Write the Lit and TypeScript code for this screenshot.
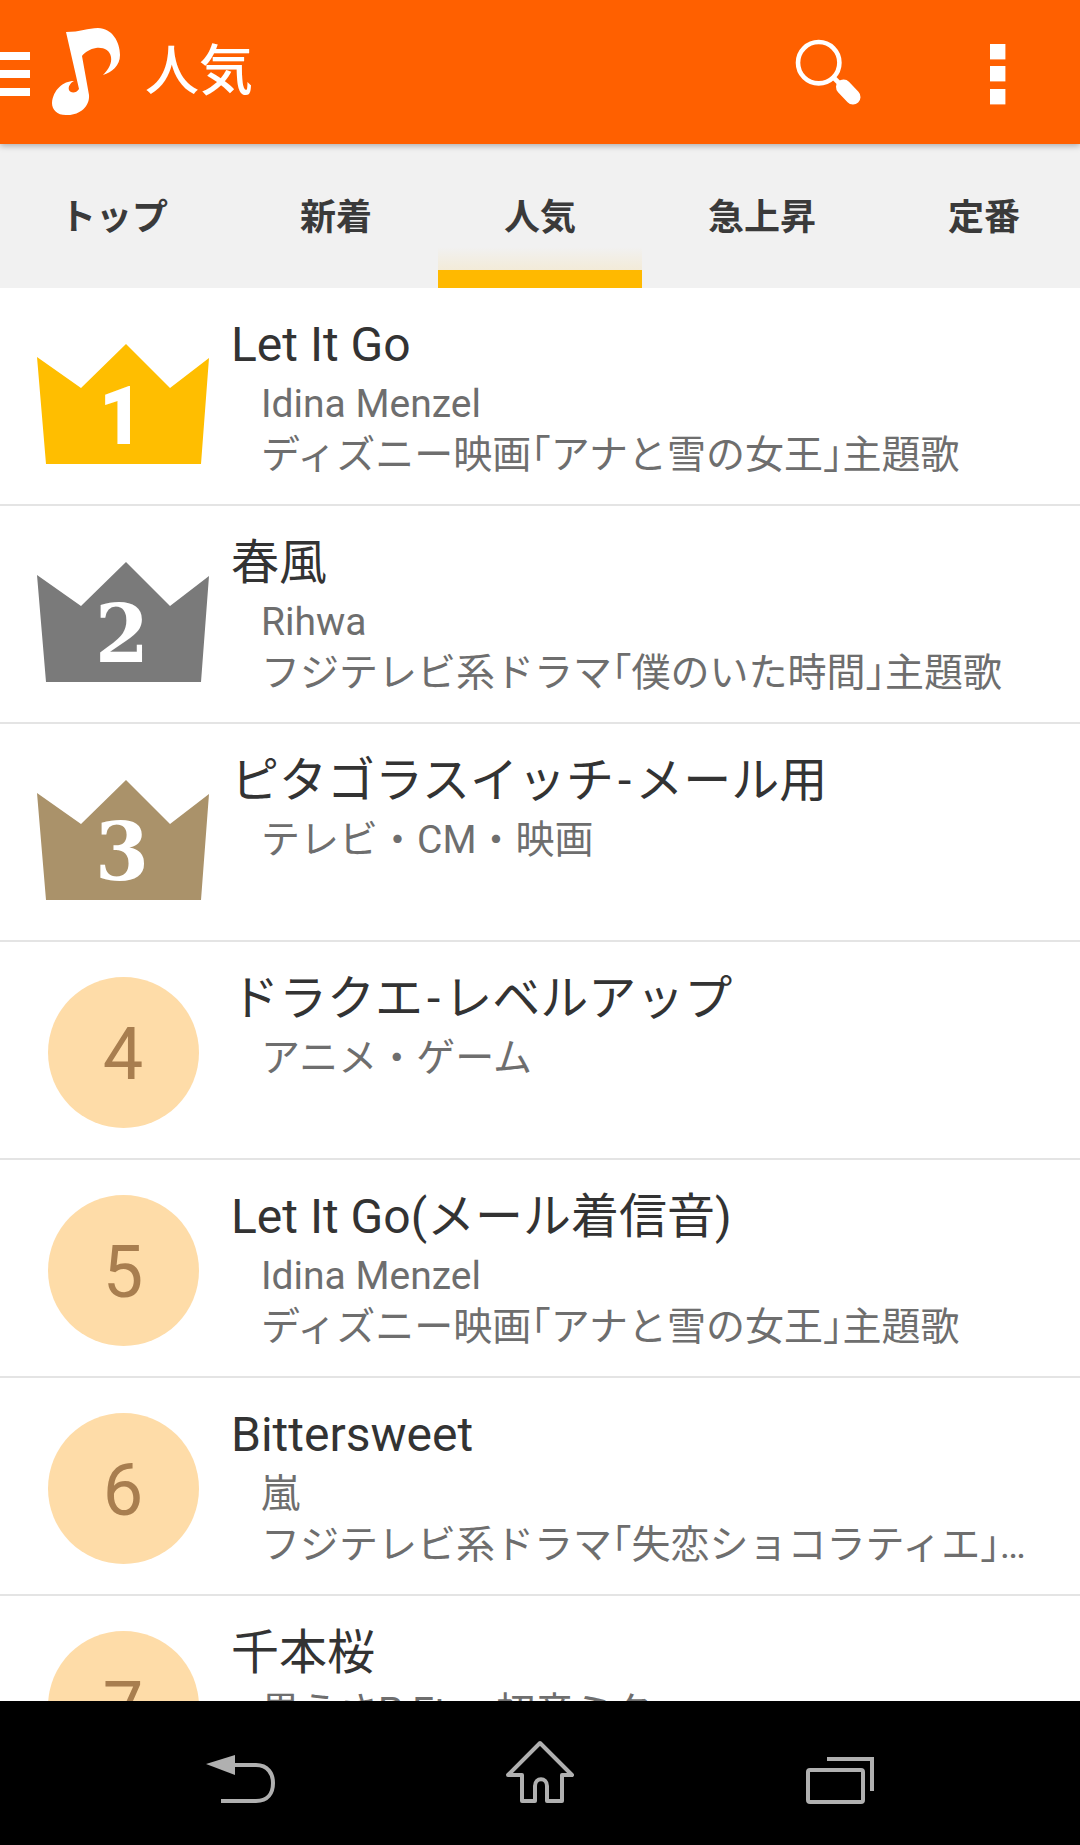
import { LitElement, html, css } from "lit";
import { customElement } from "lit/decorators.js";

interface Song { rank: number; title: string; artist: string; note: string; }

const SONGS: Song[] = [
  { rank: 1, title: "Let It Go", artist: "Idina Menzel", note: "ディズニー映画「アナと雪の女王」主題歌" },
  { rank: 2, title: "春風", artist: "Rihwa", note: "フジテレビ系ドラマ「僕のいた時間」主題歌" },
  { rank: 3, title: "ピタゴラスイッチ-メール用", artist: "テレビ・CM・映画", note: "" },
  { rank: 4, title: "ドラクエ-レベルアップ", artist: "アニメ・ゲーム", note: "" },
  { rank: 5, title: "Let It Go(メール着信音)", artist: "Idina Menzel", note: "ディズニー映画「アナと雪の女王」主題歌" },
  { rank: 6, title: "Bittersweet", artist: "嵐", note: "フジテレビ系ドラマ「失恋ショコラティエ」主題歌" },
  { rank: 7, title: "千本桜", artist: "黒うさP Ft.・初音ミク", note: "" },
];

const TABS = ["トップ", "新着", "人気", "急上昇", "定番"];
const CROWN: Record<number, string> = { 1: "#ffbe00", 2: "#7a7a7a", 3: "#aa926a" };

@customElement("app-root")
export class AppRoot extends LitElement {
  static styles = css`
    :host {
      display: flex;
      flex-direction: column;
      width: 1080px;
      height: 1845px;
      overflow: hidden;
      background: #fff;
      font-family: Roboto, "Noto Sans CJK JP", sans-serif;
    }
    .bar {
      position: relative;
      z-index: 2;
      flex: none;
      height: 144px;
      background: #ff6000;
      display: flex;
      align-items: center;
      color: #fff;
      box-shadow: 0 2px 6px rgba(0, 0, 0, 0.28);
    }
    .logo { display: block; flex: none; width: 145px; height: 144px; }
    .bar h1 {
      margin: 0;
      flex: 1;
      font-size: 54px;
      font-weight: 500;
      line-height: 146px;
    }
    .tool { display: block; flex: none; width: 300px; height: 144px; }
    .tabs {
      flex: none;
      height: 144px;
      background: #f1f1f1;
      display: flex;
      overflow: hidden;
    }
    .tab {
      position: relative;
      flex: none;
      padding: 0 66px;
      font-size: 36px;
      font-weight: 700;
      color: #3a3a3a;
      line-height: 148px;
      white-space: nowrap;
    }
    .tab:first-child { margin-left: -6px; }
    .tab.active::after {
      content: "";
      position: absolute;
      left: 0;
      right: 0;
      bottom: 0;
      height: 41px;
      box-sizing: border-box;
      background: linear-gradient(#f1f1f1, #f3ebd8 23px, #ffb900 23px);
    }
    .list { flex: 1; min-height: 0; overflow: hidden; }
    .row {
      box-sizing: border-box;
      height: 218px;
      border-bottom: 2px solid #e4e4e4;
      display: flex;
      padding-right: 50px;
    }
    .badge {
      flex: none;
      width: 172px;
      margin: 0 22px 0 37px;
      display: flex;
      justify-content: center;
    }
    .crown { display: block; width: 172px; height: 216px; }
    .circle {
      margin-top: 35px;
      width: 151px;
      height: 151px;
      border-radius: 50%;
      background: #fedca8;
      color: #a87e4f;
      font-size: 72px;
      line-height: 156px;
      text-align: center;
    }
    .text { flex: 1; min-width: 0; padding-top: 27px; }
    .title {
      font-size: 48px;
      line-height: 60px;
      color: #333;
      margin-bottom: 4px;
      white-space: nowrap;
    }
    .hy { margin: 0 4px; }
    .sub {
      font-size: 39px;
      line-height: 51px;
      color: #6e6e6e;
      padding-left: 30px;
      white-space: nowrap;
      overflow: hidden;
      text-overflow: ellipsis;
    }
    .bk { font-feature-settings: "halt"; }
    .nav {
      flex: none;
      height: 144px;
      background: #000;
      display: grid;
      grid-template-columns: repeat(3, 300px);
      justify-content: center;
      justify-items: center;
      align-items: center;
    }
    .nav svg { display: block; width: 90px; height: 90px; }
  `;

  private kinsoku(text: string) {
    return text.split(/([「」])/).map((part) =>
      part === "「" || part === "」" ? html`<span class="bk">${part}</span>` : part
    );
  }

  private title(text: string) {
    return text.split(/(-)/).map((part) =>
      part === "-" ? html`<span class="hy">-</span>` : part
    );
  }

  private badge(rank: number) {
    if (rank > 3) return html`<div class="circle">${rank}</div>`;
    const fill = CROWN[rank];
    const first = rank === 1;
    return html`<svg class="crown" viewBox="37 0 172 216">
      <polygon points="37,69 81,100 126,56 170,100 209,70 201,176 46,176" fill=${fill}></polygon>
      <text x=${first ? 121 : 122} y="156" text-anchor="middle"
        font-family=${first ? "Roboto, sans-serif" : "'DejaVu Serif', serif"}
        font-weight=${first ? 900 : 700} font-size=${first ? 82 : 80} fill="#fff"
        textLength=${first ? 44 : 54} lengthAdjust="spacingAndGlyphs">${rank}</text>
    </svg>`;
  }

  render() {
    return html`
      <header class="bar">
        <svg class="logo" viewBox="0 0 145 144">
          <rect x="0" y="52" width="30" height="8" fill="#fff"></rect>
          <rect x="0" y="70" width="30" height="8" fill="#fff"></rect>
          <rect x="0" y="88" width="30" height="8" fill="#fff"></rect>
          <path fill="#fff" d="M66 32 C80 32 88 28 98 28 C112 28 120 42 120 55 C120 66 112 72 103 75 C109 69 112 63 111 57 C110 50 103 47 96 48 C90 49 85 52 82 56 L89 95 C90 106 80 115 68 115 C58 116 52 110 52 103 C53 90 63 81 74 81 C70 83 68 87 69 90 C70 93 76 94 79 89 Z"></path>
        </svg>
        <h1>人気</h1>
        <svg class="tool" viewBox="780 0 300 144">
          <circle cx="818.7" cy="62.7" r="20.7" fill="none" stroke="#fff" stroke-width="4.6"></circle>
          <path d="M834 78 L842 86" stroke="#fff" stroke-width="4.6" fill="none"></path>
          <path d="M843.5 87 L853 97" stroke="#fff" stroke-width="15" stroke-linecap="round" fill="none"></path>
          <rect x="990" y="44" width="15.4" height="15.4" fill="#fff"></rect>
          <rect x="990" y="66" width="15.4" height="15.4" fill="#fff"></rect>
          <rect x="990" y="89" width="15.4" height="15.4" fill="#fff"></rect>
        </svg>
      </header>
      <nav class="tabs">
        ${TABS.map((t) => html`<div class="tab ${t === "人気" ? "active" : ""}">${t}</div>`)}
      </nav>
      <main class="list">
        ${SONGS.map((s) => html`
          <div class="row">
            <div class="badge">${this.badge(s.rank)}</div>
            <div class="text">
              <div class="title">${this.title(s.title)}</div>
              <div class="sub">${this.kinsoku(s.artist)}</div>
              ${s.note ? html`<div class="sub">${this.kinsoku(s.note)}</div>` : ""}
            </div>
          </div>`)}
      </main>
      <footer class="nav">
        <svg viewBox="195 1728 90 90">
          <polygon points="206,1764 235,1755 235,1775" fill="#b0b0b0"></polygon>
          <path d="M234 1765 H256 C268 1765 273 1774 273 1783 C273 1793 268 1801 256 1801 H221" fill="none" stroke="#b0b0b0" stroke-width="4"></path>
        </svg>
        <svg viewBox="495 1728 90 90">
          <path d="M522 1801 V1775 H508 L540 1743 L572 1775 H562 V1801 H547 V1786 C547 1777 535 1777 535 1786 V1801 Z" fill="none" stroke="#b0b0b0" stroke-width="4" stroke-linejoin="round"></path>
        </svg>
        <svg viewBox="795 1728 90 90">
          <rect x="808" y="1770" width="55" height="32" rx="2" fill="none" stroke="#b0b0b0" stroke-width="4"></rect>
          <path d="M827 1759 H872 V1791" fill="none" stroke="#b0b0b0" stroke-width="4"></path>
        </svg>
      </footer>
    `;
  }
}
